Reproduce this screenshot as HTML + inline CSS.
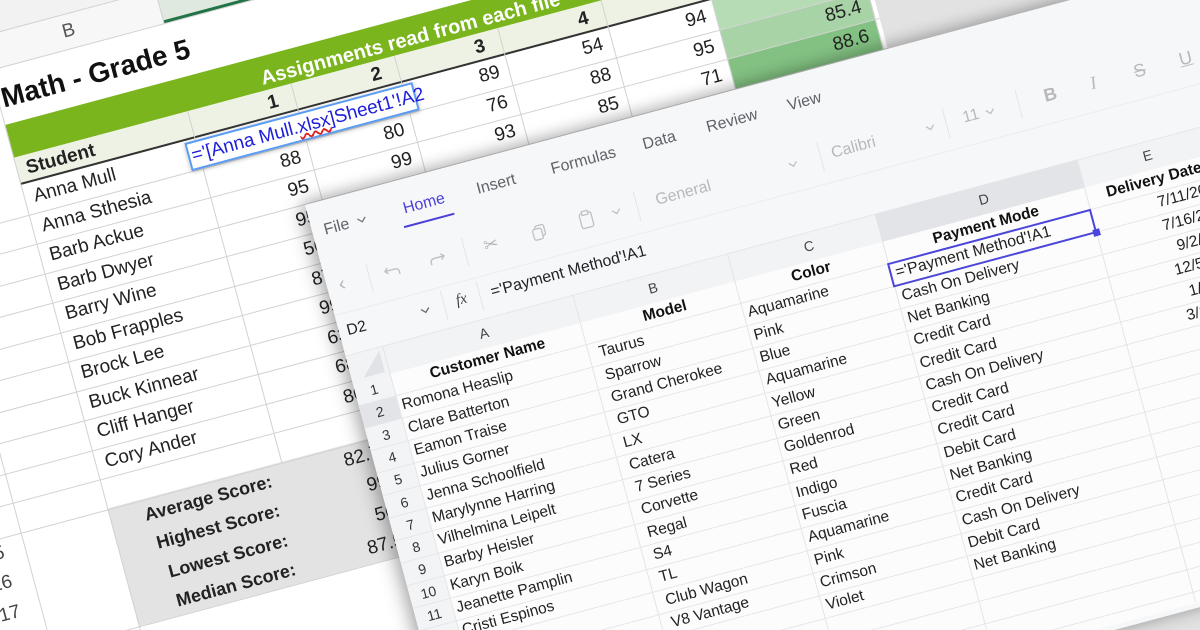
<!DOCTYPE html>
<html><head><meta charset="utf-8"><style>
*{margin:0;padding:0;box-sizing:border-box}
html,body{width:1200px;height:630px;overflow:hidden}
body{background:#e2e2e2;position:relative;font-family:"Liberation Sans",Arial,sans-serif}
#wrap{position:absolute;left:0;top:0;width:1200px;height:630px;overflow:hidden;contain:paint}
#back{position:absolute;left:0;top:0;width:0;height:0;transform-origin:0 0;transform:rotate(-15deg)}
#front{position:absolute;left:0;top:0;width:0;height:0;transform-origin:0 0;transform:translate(300px,225px) rotate(-15deg)}
.a{position:absolute;white-space:nowrap}
#back .t{position:absolute;white-space:nowrap;font-size:19px;line-height:22px;color:#222}
#back .n{position:absolute;white-space:nowrap;font-size:19px;line-height:22px;color:#222;width:70px;text-align:right}
.hl{position:absolute;height:1px;background:#d2d2d2}
.vl{position:absolute;width:1px;background:#d2d2d2}
#front .t{position:absolute;white-space:nowrap;font-size:15.5px;line-height:20px;color:#222}
#front .h{position:absolute;white-space:nowrap;font-size:15.5px;line-height:20px;color:#111;font-weight:bold;text-align:center}
#front .r{position:absolute;white-space:nowrap;font-size:14px;line-height:20px;color:#333;width:38px;text-align:center;left:10px}
.fv{position:absolute;width:1px;background:#e3e4e8}
.tab{position:absolute;font-size:16px;line-height:20px;color:#5f6368;white-space:nowrap}
.g{position:absolute;font-size:16px;line-height:20px;color:#b8b8bc;white-space:nowrap}
.sep{position:absolute;width:1px;height:30px;background:#e4e5e9}
</style></head><body><div id="wrap">

<div id="back">
  <div class="a" style="left:-200px;top:-80px;width:1045px;height:110px;background:#f2f2f2"></div>
  <div class="a" style="left:-200px;top:30px;width:1045px;height:700px;background:#fff"></div>
  <div class="a" style="left:-200px;top:30px;width:1045px;height:35px;background:#f7f7f7"></div>
  <div class="a" style="left:152px;top:30px;width:107px;height:35px;background:#dfe9df;border-bottom:3px solid #217346"></div>
  <div class="t" style="left:52px;top:37px;color:#555">B</div>
  <div class="t" style="left:198px;top:37px;color:#217346">C</div>
  <div class="a" style="left:-24px;top:80px;font-size:28px;font-weight:bold;color:#111;line-height:32px">Math - Grade 5</div>
  <div class="a" style="left:-28px;top:122px;width:868px;height:34px;background:#7ab51d"></div>
  <div class="a" style="left:232px;top:132px;font-size:20px;font-weight:bold;color:#fff;line-height:24px">Assignments read from each file</div>
  <div class="a" style="left:-28px;top:156px;width:868px;height:28px;background:#eef2e5;border-bottom:2px solid #333"></div>
  <div class="t" style="left:-18px;top:159px;font-weight:bold">Student</div>
  <div class="t" style="left:232px;top:159px;font-weight:bold">1</div>
  <div class="t" style="left:339px;top:159px;font-weight:bold">2</div>
  <div class="t" style="left:446px;top:159px;font-weight:bold">3</div>
  <div class="t" style="left:553px;top:159px;font-weight:bold">4</div>
  <div class="a" style="left:687px;top:184px;width:153px;height:30.5px;background:#b6dcb6"></div>
  <div class="a" style="left:687px;top:214.5px;width:153px;height:30.5px;background:#a7d3a7"></div>
  <div class="a" style="left:687px;top:245px;width:153px;height:30.5px;background:#82c182"></div>
  <div class="a" style="left:687px;top:275.5px;width:153px;height:200px;background:#70b870"></div>
  <div class="a" style="left:-28px;top:519px;width:287px;height:122px;background:#e3e3e3"></div>
  <div class="hl" style="left:-200px;top:30px;width:1045px"></div>
  <div class="hl" style="left:-200px;top:65px;width:1045px"></div>
  <div class="hl" style="left:-200px;top:214.5px;width:1045px"></div>
  <div class="hl" style="left:-200px;top:245px;width:1045px"></div>
  <div class="hl" style="left:-200px;top:275.5px;width:1045px"></div>
  <div class="hl" style="left:-200px;top:306px;width:1045px"></div>
  <div class="hl" style="left:-200px;top:336.5px;width:1045px"></div>
  <div class="hl" style="left:-200px;top:367px;width:1045px"></div>
  <div class="hl" style="left:-200px;top:397.5px;width:1045px"></div>
  <div class="hl" style="left:-200px;top:428px;width:1045px"></div>
  <div class="hl" style="left:-200px;top:458.5px;width:1045px"></div>
  <div class="hl" style="left:-200px;top:489px;width:1045px"></div>
  <div class="hl" style="left:-200px;top:519.5px;width:1045px"></div>
  <div class="hl" style="left:-200px;top:641px;width:1045px"></div>
  <div class="vl" style="left:-118px;top:30px;height:640px"></div>
  <div class="vl" style="left:-28px;top:30px;height:640px"></div>
  <div class="vl" style="left:152px;top:30px;height:35px"></div>
  <div class="vl" style="left:259px;top:30px;height:35px"></div>
  <div class="vl" style="left:366px;top:30px;height:35px"></div>
  <div class="vl" style="left:473px;top:30px;height:35px"></div>
  <div class="vl" style="left:580px;top:30px;height:35px"></div>
  <div class="vl" style="left:687px;top:30px;height:35px"></div>
  <div class="vl" style="left:152px;top:156px;height:364px"></div>
  <div class="vl" style="left:259px;top:156px;height:364px"></div>
  <div class="vl" style="left:366px;top:156px;height:364px"></div>
  <div class="vl" style="left:473px;top:156px;height:364px"></div>
  <div class="vl" style="left:580px;top:156px;height:364px"></div>
  <div class="vl" style="left:687px;top:156px;height:364px"></div>
  <div class="vl" style="left:840px;top:30px;height:640px"></div>
  <div class="t" style="left:-18px;top:188px">Anna Mull</div>
  <div class="t" style="left:-18px;top:218.5px">Anna Sthesia</div>
  <div class="t" style="left:-18px;top:249px">Barb Ackue</div>
  <div class="t" style="left:-18px;top:279.5px">Barb Dwyer</div>
  <div class="t" style="left:-18px;top:310px">Barry Wine</div>
  <div class="t" style="left:-18px;top:340.5px">Bob Frapples</div>
  <div class="t" style="left:-18px;top:371px">Brock Lee</div>
  <div class="t" style="left:-18px;top:401.5px">Buck Kinnear</div>
  <div class="t" style="left:-18px;top:432px">Cliff Hanger</div>
  <div class="t" style="left:-18px;top:462.5px">Cory Ander</div>
  <div class="n" style="left:180px;top:218.5px">88</div>
  <div class="n" style="left:180px;top:249px">95</div>
  <div class="n" style="left:180px;top:279.5px">95</div>
  <div class="n" style="left:180px;top:310px">56</div>
  <div class="n" style="left:180px;top:340.5px">87</div>
  <div class="n" style="left:180px;top:371px">99</div>
  <div class="n" style="left:180px;top:401.5px">63</div>
  <div class="n" style="left:180px;top:432px">68</div>
  <div class="n" style="left:180px;top:462.5px">80</div>
  <div class="n" style="left:287px;top:218.5px">80</div>
  <div class="n" style="left:287px;top:249px">99</div>
  <div class="n" style="left:394px;top:188px">89</div>
  <div class="n" style="left:394px;top:218.5px">76</div>
  <div class="n" style="left:394px;top:249px">93</div>
  <div class="n" style="left:501px;top:188px">54</div>
  <div class="n" style="left:501px;top:218.5px">88</div>
  <div class="n" style="left:501px;top:249px">85</div>
  <div class="n" style="left:608px;top:188px">94</div>
  <div class="n" style="left:608px;top:218.5px">95</div>
  <div class="n" style="left:608px;top:249px">71</div>
  <div class="n" style="left:760px;top:218.5px">85.4</div>
  <div class="n" style="left:760px;top:249px">88.6</div>
  <div class="t" style="left:-20px;top:523.5px;width:158px;text-align:right;font-weight:bold;font-size:18px">Average Score:</div>
  <div class="t" style="left:-20px;top:554px;width:158px;text-align:right;font-weight:bold;font-size:18px">Highest Score:</div>
  <div class="t" style="left:-20px;top:584.5px;width:158px;text-align:right;font-weight:bold;font-size:18px">Lowest Score:</div>
  <div class="t" style="left:-20px;top:615px;width:158px;text-align:right;font-weight:bold;font-size:18px">Median Score:</div>
  <div class="n" style="left:180px;top:523.5px">82.7</div>
  <div class="n" style="left:180px;top:554px">99</div>
  <div class="n" style="left:180px;top:584.5px">56</div>
  <div class="n" style="left:180px;top:615px">87.5</div>
  <div class="t" style="left:-160px;top:523.5px;color:#444">15</div>
  <div class="t" style="left:-160px;top:554px;color:#444">16</div>
  <div class="t" style="left:-160px;top:584.5px;color:#444">17</div>
  <div class="a" style="left:141px;top:186px;width:236px;height:29px;background:#fff;border:2px solid #5a9cf2;box-shadow:0 1px 4px rgba(0,0,0,.3);font-size:19px;line-height:25px;color:#1d1ddb;padding-left:2px">='[Anna Mull.<span style="text-decoration:underline wavy #e02020">xlsx</span>]Sheet1'!A2</div>
</div>

<div id="front">
  <div class="a" style="left:10px;top:-18px;width:1100px;height:620px;background:#f6f7f9;box-shadow:-6px 0 18px rgba(0,0,0,.28),0 -4px 14px rgba(0,0,0,.12)"></div>
  <div class="tab" style="left:22px;top:2px">File</div>
  <svg class="a" style="left:55px;top:6px" width="12" height="10"><path d="M2 3 L6 7 L10 3" fill="none" stroke="#777" stroke-width="1.3"/></svg>
  <div class="tab" style="left:104px;top:2px;color:#4b3fd8">Home</div>
  <div class="a" style="left:100px;top:28px;width:52px;height:2px;background:#4b3fd8"></div>
  <div class="tab" style="left:180px;top:2px">Insert</div>
  <div class="tab" style="left:257px;top:2px">Formulas</div>
  <div class="tab" style="left:352px;top:2px">Data</div>
  <div class="tab" style="left:418px;top:2px">Review</div>
  <div class="tab" style="left:502px;top:2px">View</div>
  <div class="g" style="left:22px;top:58px;font-size:20px">‹</div>
  <div class="sep" style="left:53px;top:54px"></div>
  <svg class="a" style="left:68px;top:60px" width="20" height="16"><path d="M5 4 L2 7 L5 10 M2 7 H12 Q16 7 16 11 V13" fill="none" stroke="#c0c0c4" stroke-width="1.4"/></svg>
  <svg class="a" style="left:113px;top:60px" width="20" height="16"><path d="M15 4 L18 7 L15 10 M18 7 H8 Q4 7 4 11 V13" fill="none" stroke="#c0c0c4" stroke-width="1.4"/></svg>
  <div class="sep" style="left:152px;top:54px"></div>
  <div class="g" style="left:172px;top:58px;font-size:18px">✂</div>
  <svg class="a" style="left:221px;top:60px" width="18" height="18"><rect x="5" y="2" width="9" height="11" rx="2" fill="none" stroke="#c0c0c4" stroke-width="1.3"/><rect x="2" y="5" width="9" height="11" rx="2" fill="#f6f7f9" stroke="#c0c0c4" stroke-width="1.3"/></svg>
  <svg class="a" style="left:270px;top:59px" width="18" height="20"><rect x="2" y="3" width="12" height="15" rx="2" fill="none" stroke="#c0c0c4" stroke-width="1.3"/><rect x="5" y="1" width="6" height="4" fill="#f6f7f9" stroke="#c0c0c4" stroke-width="1.2"/></svg>
  <svg class="a" style="left:303px;top:64px" width="12" height="10"><path d="M2 3 L6 7 L10 3" fill="none" stroke="#c0c0c4" stroke-width="1.3"/></svg>
  <div class="sep" style="left:330px;top:54px"></div>
  <div class="g" style="left:350px;top:59px">General</div>
  <svg class="a" style="left:486px;top:64px" width="12" height="10"><path d="M2 3 L6 7 L10 3" fill="none" stroke="#c0c0c4" stroke-width="1.3"/></svg>
  <div class="sep" style="left:520px;top:54px"></div>
  <div class="g" style="left:532px;top:59px">Calibri</div>
  <svg class="a" style="left:628px;top:64px" width="12" height="10"><path d="M2 3 L6 7 L10 3" fill="none" stroke="#c0c0c4" stroke-width="1.3"/></svg>
  <div class="sep" style="left:650px;top:54px"></div>
  <div class="g" style="left:668px;top:59px">11</div>
  <svg class="a" style="left:690px;top:64px" width="12" height="10"><path d="M2 3 L6 7 L10 3" fill="none" stroke="#c0c0c4" stroke-width="1.3"/></svg>
  <div class="sep" style="left:725px;top:54px"></div>
  <div class="g" style="left:752px;top:58px;font-weight:bold;font-size:18px">B</div>
  <div class="g" style="left:800px;top:58px;font-style:italic;font-size:18px;font-family:'Liberation Serif',serif">I</div>
  <div class="g" style="left:845px;top:58px;font-size:18px;text-decoration:line-through">S</div>
  <div class="g" style="left:892px;top:58px;font-size:18px;text-decoration:underline">U</div>
  <div class="a" style="left:10px;top:96px;width:1100px;height:1px;background:#ebecef"></div>
  <div class="t" style="left:18px;top:105px">D2</div>
  <svg class="a" style="left:93px;top:110px" width="12" height="10"><path d="M2 3 L6 7 L10 3" fill="none" stroke="#666" stroke-width="1.3"/></svg>
  <div class="sep" style="left:118px;top:100px"></div>
  <div class="t" style="left:131px;top:104px;font-family:'Liberation Serif',serif;font-style:italic;color:#444">fx</div>
  <div class="sep" style="left:155px;top:100px"></div>
  <div class="t" style="left:167px;top:105px;font-size:16px">='Payment Method'!A1</div>
  <div class="a" style="left:10px;top:138px;width:1100px;height:28.5px;background:#f2f3f5;border-top:1px solid #e6e7ea"></div>
  <div class="a" style="left:558px;top:138px;width:209px;height:28.5px;background:#e3e4e8"></div>
  <div class="a" style="left:10px;top:166.5px;width:1100px;height:430px;background:#fcfcfd"></div>
  <div class="a" style="left:10px;top:166.5px;width:38px;height:430px;background:#f3f4f6"></div>
  <div class="a" style="left:10px;top:189.8px;width:38px;height:23.3px;background:#e3e4e8"></div>
  <svg class="a" style="left:10px;top:138px" width="38" height="28"><path d="M34 4 V26 H12 Z" fill="#e1e2e6"/></svg>
  <div class="a" style="left:10px;top:166.5px;width:1100px;height:430px;background:repeating-linear-gradient(180deg,transparent 0 22.3px,#e6e7ea 22.3px 23.3px)"></div>
  <div class="fv" style="left:48px;top:138px;height:458px"></div>
  <div class="fv" style="left:245px;top:138px;height:458px"></div>
  <div class="fv" style="left:405px;top:138px;height:458px"></div>
  <div class="fv" style="left:558px;top:138px;height:458px"></div>
  <div class="fv" style="left:767px;top:138px;height:458px"></div>
  <div class="fv" style="left:906px;top:138px;height:458px"></div>
  <div class="t" style="left:145px;top:142px;font-size:14px;color:#444">A</div>
  <div class="t" style="left:320px;top:142px;font-size:14px;color:#444">B</div>
  <div class="t" style="left:481px;top:142px;font-size:14px;color:#444">C</div>
  <div class="t" style="left:662px;top:142px;font-size:14px;color:#444">D</div>
  <div class="t" style="left:832px;top:142px;font-size:14px;color:#444">E</div>
  <div class="r" style="top:168px">1</div>
  <div class="r" style="top:191.3px">2</div>
  <div class="r" style="top:214.6px">3</div>
  <div class="r" style="top:237.9px">4</div>
  <div class="r" style="top:261.2px">5</div>
  <div class="r" style="top:284.5px">6</div>
  <div class="r" style="top:307.8px">7</div>
  <div class="r" style="top:331.1px">8</div>
  <div class="r" style="top:354.4px">9</div>
  <div class="r" style="top:377.7px">10</div>
  <div class="r" style="top:401px">11</div>
  <div class="r" style="top:424.3px">12</div>
  <div class="h" style="left:48px;top:168px;width:197px">Customer Name</div>
  <div class="h" style="left:245px;top:168px;width:170px">Model</div>
  <div class="h" style="left:405px;top:168px;width:153px">Color</div>
  <div class="h" style="left:558px;top:168px;width:209px">Payment Mode</div>
  <div class="h" style="left:767px;top:168px;width:139px">Delivery Date</div>
  <div class="t" style="left:52px;top:191.3px">Romona Heaslip</div>
  <div class="t" style="left:52px;top:214.6px">Clare Batterton</div>
  <div class="t" style="left:52px;top:237.9px">Eamon Traise</div>
  <div class="t" style="left:52px;top:261.2px">Julius Gorner</div>
  <div class="t" style="left:52px;top:284.5px">Jenna Schoolfield</div>
  <div class="t" style="left:52px;top:307.8px">Marylynne Harring</div>
  <div class="t" style="left:52px;top:331.1px">Vilhelmina Leipelt</div>
  <div class="t" style="left:52px;top:354.4px">Barby Heisler</div>
  <div class="t" style="left:52px;top:377.7px">Karyn Boik</div>
  <div class="t" style="left:52px;top:401px">Jeanette Pamplin</div>
  <div class="t" style="left:52px;top:424.3px">Cristi Espinos</div>
  <div class="t" style="left:256px;top:191.3px">Taurus</div>
  <div class="t" style="left:256px;top:214.6px">Sparrow</div>
  <div class="t" style="left:256px;top:237.9px">Grand Cherokee</div>
  <div class="t" style="left:256px;top:261.2px">GTO</div>
  <div class="t" style="left:256px;top:284.5px">LX</div>
  <div class="t" style="left:256px;top:307.8px">Catera</div>
  <div class="t" style="left:256px;top:331.1px">7 Series</div>
  <div class="t" style="left:256px;top:354.4px">Corvette</div>
  <div class="t" style="left:256px;top:377.7px">Regal</div>
  <div class="t" style="left:256px;top:401px">S4</div>
  <div class="t" style="left:256px;top:424.3px">TL</div>
  <div class="t" style="left:256px;top:447.6px">Club Wagon</div>
  <div class="t" style="left:256px;top:470.9px">V8 Vantage</div>
  <div class="t" style="left:410px;top:191.3px">Aquamarine</div>
  <div class="t" style="left:410px;top:214.6px">Pink</div>
  <div class="t" style="left:410px;top:237.9px">Blue</div>
  <div class="t" style="left:410px;top:261.2px">Aquamarine</div>
  <div class="t" style="left:410px;top:284.5px">Yellow</div>
  <div class="t" style="left:410px;top:307.8px">Green</div>
  <div class="t" style="left:410px;top:331.1px">Goldenrod</div>
  <div class="t" style="left:410px;top:354.4px">Red</div>
  <div class="t" style="left:410px;top:377.7px">Indigo</div>
  <div class="t" style="left:410px;top:401px">Fuscia</div>
  <div class="t" style="left:410px;top:424.3px">Aquamarine</div>
  <div class="t" style="left:410px;top:447.6px">Pink</div>
  <div class="t" style="left:410px;top:470.9px">Crimson</div>
  <div class="t" style="left:410px;top:494.2px">Violet</div>
  <div class="t" style="left:563px;top:191.3px;font-size:16px">='Payment Method'!A1</div>
  <div class="a" style="left:557px;top:189px;width:211px;height:25px;border:2px solid #4b46d9"></div>
  <div class="a" style="left:764px;top:210px;width:7px;height:7px;background:#4b46d9"></div>
  <div class="t" style="left:563px;top:214.6px">Cash On Delivery</div>
  <div class="t" style="left:563px;top:237.9px">Net Banking</div>
  <div class="t" style="left:563px;top:261.2px">Credit Card</div>
  <div class="t" style="left:563px;top:284.5px">Credit Card</div>
  <div class="t" style="left:563px;top:307.8px">Cash On Delivery</div>
  <div class="t" style="left:563px;top:331.1px">Credit Card</div>
  <div class="t" style="left:563px;top:354.4px">Credit Card</div>
  <div class="t" style="left:563px;top:377.7px">Debit Card</div>
  <div class="t" style="left:563px;top:401px">Net Banking</div>
  <div class="t" style="left:563px;top:424.3px">Credit Card</div>
  <div class="t" style="left:563px;top:447.6px">Cash On Delivery</div>
  <div class="t" style="left:563px;top:470.9px">Debit Card</div>
  <div class="t" style="left:563px;top:494.2px">Net Banking</div>
  <div class="t" style="left:780px;top:191.3px;width:122px;text-align:right">7/11/2022</div>
  <div class="t" style="left:780px;top:214.6px;width:122px;text-align:right">7/16/2022</div>
  <div class="t" style="left:780px;top:237.9px;width:122px;text-align:right">9/2/2022</div>
  <div class="t" style="left:780px;top:261.2px;width:122px;text-align:right">12/5/2022</div>
  <div class="t" style="left:780px;top:284.5px;width:122px;text-align:right">1/8/2022</div>
  <div class="t" style="left:780px;top:307.8px;width:122px;text-align:right">3/14/2022</div>
</div>
</div></body></html>
